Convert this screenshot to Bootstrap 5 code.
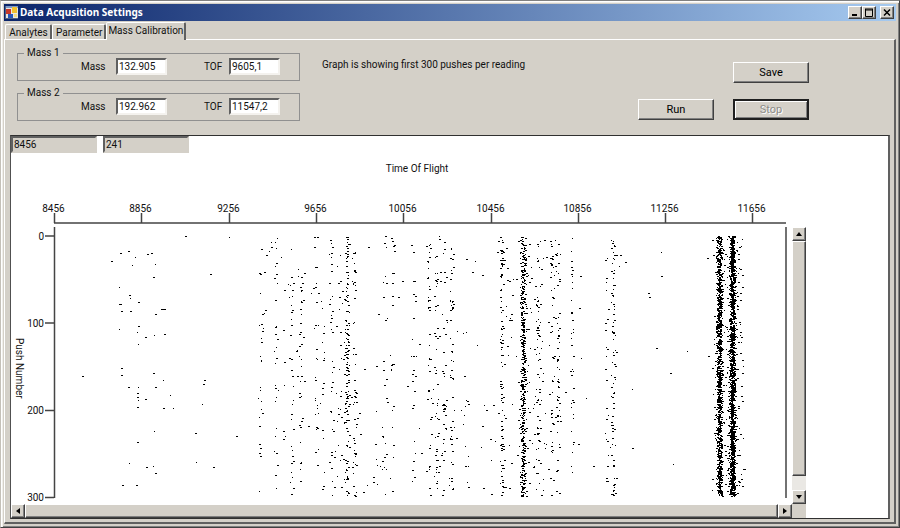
<!DOCTYPE html>
<html lang="en">
<head>
<meta charset="utf-8">
<meta name="viewport" content="width=device-width, initial-scale=1">
<title>Data Acqusition Settings</title>
<link rel="stylesheet" href="https://cdn.jsdelivr.net/npm/bootstrap@5.3.0/dist/css/bootstrap.min.css">
<style>
:root { --face: #d4d0c8; --dark: #404040; --shade: #808080; }
body { background: var(--face); color: #111; font: 10px/13px Roboto, "Liberation Sans", sans-serif; }
.win { border: 1px solid var(--dark); border-top-color: var(--shade); border-left-color: #c4c0b8; padding: 3px;
  box-shadow: inset 1px 1px #fff, inset 2px 2px #f0eeea, inset -1px -1px var(--shade); }
.titlebar { height: 17px; padding: 0 2px 0 1px; background: linear-gradient(90deg, #0a246a, #a6caf0); }
.titlebar svg.logo { margin-right: 2px; }
.titlebar h1 { margin: 0; color: #fff; font: bold 10px/17px "Noto Sans", sans-serif; }
.raised { background: var(--face); border: 1px solid; border-color: #fff var(--dark) var(--dark) #fff; border-radius: 0;
  box-shadow: inset -1px -1px var(--shade); padding: 0; color: #000; display: flex; align-items: center; justify-content: center; }
.winbtn { width: 14px; height: 13px; }
.tabs { border: 0; padding: 1px 0 0 1px; align-items: flex-end; }
.tabs .nav-link { font-size: 10px; line-height: 13px; color: #111; padding: 1px 2px 1px 3px; margin: 0; height: 15px; min-width: 47px;
  border: 1px solid #fff; border-right: 2px solid #606060; border-bottom: 0; border-radius: 2px 2px 0 0; background: var(--face); }
.tabs .nav-link:hover { border-color: #fff #606060 #fff #fff; }
.tabs .nav-link.active { height: 18px; padding: 1px 1px 4px; min-width: 80px; color: #111; background: var(--face);
  border-color: #fff #606060 transparent #fff; margin-bottom: -1px; position: relative; }
.pane { border: 1px solid #fff; border-right: 2px solid #606060; border-bottom: 2px solid #606060; padding: 0 4px 3px 5px; }
.controls { padding: 8px 81px 14px 7px; }
.group { width: 283px; border: 1px solid #909090; padding: 0 19px 5px 63px; margin: 0; }
.group legend { float: none; width: auto; font-size: 10px; line-height: 10px; margin: 0 0 0 -57px; padding: 0 3px; }
.group .fields { display: grid; grid-template-columns: 35px 51px 1fr 51px; align-items: center; }
.group .tof { padding-left: 37px; }
.groups { gap: 7px; }
.sunken { width: 51px; height: 17px; font-size: 10px; line-height: 13px; padding: 0 1px; border: 2px solid;
  border-color: #606060 #f4f2ee #f4f2ee #606060; border-radius: 0; background: #fff; color: #111; min-height: 0; }
.readouts { gap: 6px; }
.readout { width: 86px; border-color: #606060 var(--face) var(--face) #606060; background: var(--face); }
.msg { padding: 10px 0 0 22px; }
.cmds { display: grid; grid-template-columns: 76px 76px; gap: 16px 19px; padding-top: 14px; }
.cmd { height: 21px; font-size: 11px; line-height: 13px; }
.cmd.stop { border: 2px solid #202020; box-shadow: inset 1px 1px #fff, inset -1px -1px var(--shade); color: #8c8c88; opacity: 1; text-shadow: 1px 1px #fff; }
.graph { background: #fff; border: 1px solid #303030; border-left: 1px solid #505050; border-right: 2px solid #606060; }
.board { display: grid; grid-template-columns: minmax(0, 1fr) 14px 82px; grid-template-rows: auto 14px; }
.board svg.plot { display: block; width: 100%; height: auto; }
.plot text { font-size: 10px; fill: #111; }
.vbar { margin-top: 74px; background: #eae8e4; }
.vbar .raised, .hbar .raised { flex: none; width: 14px; height: 14px; }
.vbar .thumb { height: 85%; width: 14px; flex: 0 1 auto; }
.hbar .thumb { flex: 1 1 auto; }
.corner { background: var(--face); }
</style>
<script src="https://cdn.jsdelivr.net/npm/bootstrap@5.3.0/dist/js/bootstrap.bundle.min.js"></script>
</head>
<body>
<main class="win min-vh-100 d-flex flex-column">
  <header class="titlebar d-flex align-items-center">
    <svg width="13" height="13" viewBox="0 0 13 13" class="logo flex-shrink-0" aria-hidden="true">
      <rect width="13" height="13" fill="#e8e6e0"/><rect width="13" height="2" fill="#7e99c8"/>
      <rect x="1" y="3" width="5" height="5" fill="#c83828"/><rect x="7" y="1" width="5" height="6" fill="#f0c030"/>
      <rect x="3" y="8" width="5" height="4" fill="#2858b8"/><rect x="9" y="8" width="3" height="3" fill="#f4dc80"/>
      <path d="M0 12.5H13M.5 0V13" stroke="#506080"/>
    </svg>
    <h1 class="flex-grow-1">Data Acqusition Settings</h1>
    <button class="raised winbtn" aria-label="Minimize"><svg width="10" height="9"><path d="M2 7h5" stroke="#000" stroke-width="2"/></svg></button>
    <button class="raised winbtn me-1" aria-label="Maximize"><svg width="10" height="9"><path d="M1 1h8M1.500 1v7.500h7V1M1 2h8" stroke="#000" fill="none"/></svg></button>
    <button class="raised winbtn" aria-label="Close"><svg width="10" height="9"><path d="M2 1.500l6 6M8 1.500l-6 6" stroke="#000" stroke-width="1.500"/></svg></button>
  </header>
  <div class="nav nav-tabs tabs" role="tablist">
    <button class="nav-link" role="tab" aria-selected="false">Analytes</button>
    <button class="nav-link" role="tab" aria-selected="false">Parameter</button>
    <button class="nav-link active" role="tab" aria-selected="true">Mass Calibration</button>
  </div>
  <section class="pane flex-grow-1 d-flex flex-column" role="tabpanel">
    <div class="controls d-flex align-items-start">
      <div class="groups d-grid">
        <fieldset class="group">
          <legend>Mass 1</legend>
          <div class="fields">
            <label for="m1">Mass</label><input id="m1" class="sunken" value="132.905">
            <label for="t1" class="tof">TOF</label><input id="t1" class="sunken" value="9605,1">
          </div>
        </fieldset>
        <fieldset class="group">
          <legend>Mass 2</legend>
          <div class="fields">
            <label for="m2">Mass</label><input id="m2" class="sunken" value="192.962">
            <label for="t2" class="tof">TOF</label><input id="t2" class="sunken" value="11547,2">
          </div>
        </fieldset>
      </div>
      <div class="msg flex-grow-1">Graph is showing first 300 pushes per reading</div>
      <div class="cmds">
        <span></span><button class="raised cmd">Save</button>
        <button class="raised cmd">Run</button><button class="raised cmd stop" disabled>Stop</button>
      </div>
    </div>
    <div class="graph flex-grow-1">
      <div class="readouts d-flex">
        <input class="sunken readout" aria-label="Time of flight position" value="8456" readonly>
        <input class="sunken readout" aria-label="Push position" value="241" readonly>
      </div>
      <div class="board">
        <svg class="plot" viewBox="11 153 781 351" role="img" aria-label="Push number against time of flight">
          <g stroke="#444" stroke-width="1.500" fill="none">
            <path id="xaxis" d="M54 223H786"/>
            <path d="M54.500 227V498M786 227V498M45 236H54M45 323H54M45 410.500H54M45 497.500H54"/>
          </g>
          <g id="xlabels" text-anchor="middle"></g>
          <text x="417" y="172" text-anchor="middle">Time Of Flight</text>
          <g text-anchor="end">
            <text x="44" y="240">0</text><text x="44" y="327">100</text><text x="44" y="414">200</text><text x="44" y="501">300</text>
          </g>
          <text transform="translate(16 338) rotate(90)">Push Number</text>
          <path id="dots" stroke="#000" fill="none"/>
        </svg>
        <div class="vbar d-flex flex-column">
          <button class="raised" aria-label="Scroll up"><svg width="8" height="6"><path d="M1 5h6L4 1z"/></svg></button>
          <div class="raised thumb"></div>
          <button class="raised mt-auto" aria-label="Scroll down"><svg width="8" height="6"><path d="M1 1h6L4 5z"/></svg></button>
        </div>
        <span></span>
        <div class="hbar d-flex">
          <button class="raised" aria-label="Scroll left"><svg width="6" height="8"><path d="M5 1v6L1 4z"/></svg></button>
          <div class="raised thumb"></div>
          <button class="raised" aria-label="Scroll right"><svg width="6" height="8"><path d="M1 1v6l4-3z"/></svg></button>
        </div>
        <div class="corner"></div>
      </div>
    </div>
  </section>
</main>
<script>
const SVG = 'http://www.w3.org/2000/svg';
const axis = document.getElementById('xaxis'), labels = document.getElementById('xlabels');
let ticks = axis.getAttribute('d');
for (let i = 0; i < 9; i++) {
  const x = Math.round(54 + i * 87.3) + 0.5;
  ticks += `M${x} 213V223`;
  const t = document.createElementNS(SVG, 'text');
  t.setAttribute('x', x - 1); t.setAttribute('y', 212);
  t.textContent = 8456 + i * 400;
  labels.append(t);
}
axis.setAttribute('d', ticks);

// Isolated ion events
const single = [[185,236],[229,237],[277,238],[271,242],[120,253],[128,251],[147,254],[151,253],[111,261],[135,257],[132,265],
  [155,264],[153,277],[210,274],[119,287],[129,295],[130,298],[138,302],[119,304],[120,304],[121,311],[130,311],[155,314],[161,309],
  [163,309],[164,309],[138,326],[119,329],[137,332],[145,337],[154,335],[164,334],[138,344],[121,368],[82,376],[121,375],[153,373],
  [163,380],[128,387],[138,387],[155,387],[137,393],[137,397],[145,399],[138,400],[170,395],[137,407],[163,408],[173,408],[204,380],
  [203,384],[202,404],[154,431],[195,433],[236,436],[137,442],[129,463],[146,467],[153,466],[155,473],[196,462],[213,467],[122,485],
  [136,485],[661,252],[661,276],[648,293],[649,297],[656,348],[687,351],[670,373],[632,389],[632,448],[673,464],[707,258],[708,356],
  [593,466],[580,276],[579,308],[581,358],[586,398],[578,444],[612,243],[614,245],[616,255],[620,255],[625,262],[619,266],[605,260]];
// Columns of events: centre, spread, count
const bands = [[260,1,26],[276,1,27],[284,3,10],[291.5,1,27],[300,1,34],[315.5,1,26],[323,1,15],[331.5,1,34],[339,1.5,24],
  [346.500,1.2,140],[354,1.2,50],[376,1,7],[384,1.2,22],[392,1,22],[413.5,1.2,22],[429,1.2,42],[436.5,1.5,48],[443.5,1,32],
  [451,1.3,50],[466,1.5,14],[501.500,1,95],[508,2,20],[522.500,1.200,450],[526,4,70],[537.5,1.2,60],[543,2,18],[551,1.2,44],
  [557.5,1.2,62],[572,1,36],[606,1.2,24],[613,1.2,80],[719,1.300,1050],[719,3.500,110],[732,1.300,1450],[732,4,160],[740,1.8,40]];
let seed = 20457;
const rnd = () => (seed = (seed * 1664525 + 1013904223) >>> 0) / 4294967296;
const bell = () => (rnd() + rnd() + rnd() + rnd() - 2) * 1.73;
let d = '';
const dot = (x, y) => { d += `M${Math.round(x)} ${Math.round(y) + 0.5}h${rnd() < 0.55 ? 2 : 1}`; };
single.forEach(p => dot(p[0], p[1]));
for (const [x, s, n] of bands) for (let i = 0; i < n; i++) dot(x + bell() * s, 236 + rnd() * 260);
for (let i = 0; i < 130; i++) dot(262 + rnd() * 310, 237 + rnd() * 259);
document.getElementById('dots').setAttribute('d', d);
</script>
</body>
</html>
